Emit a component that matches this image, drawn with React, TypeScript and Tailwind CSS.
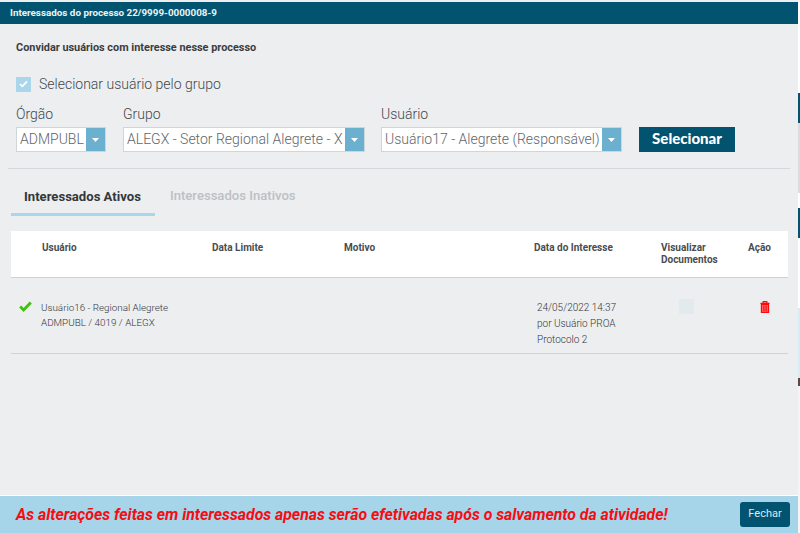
import React from "react";

function Select({ label, value, boxW, className }: { label: string; value: string; boxW: string; className?: string }) {
  return (
    <div className={"flex flex-col " + (className ?? "")}>
      <div className="h-[18px] text-[14px] font-light leading-[18px] text-[#43484b]">{label}</div>
      <div className={"mt-[4px] flex h-[25px] border border-[#cfd6da] bg-white " + boxW}>
        <div className="flex-1 overflow-hidden whitespace-nowrap pl-[3px] text-[14px] font-light leading-[23px] text-[#60666a]">{value}</div>
        <div className="flex w-[19px] shrink-0 items-center justify-center bg-[#6cb0cf]">
          <svg width="7" height="4" viewBox="0 0 7 4"><path d="M0 0h7L3.5 4z" fill="#fff" /></svg>
        </div>
      </div>
    </div>
  );
}

export default function App() {
  return (
    <div className="flex h-[533px] w-[800px] overflow-hidden bg-[#eceef0] font-['Roboto',sans-serif]">
      <div className="flex w-[798px] flex-col">
        <div className="mt-[2px] flex h-[22px] shrink-0 items-center bg-[#02536f] pl-[10px] text-[9.85px] font-bold text-[#eaf3f6]">
          Interessados do processo 22/9999-0000008-9
        </div>

        <div className="flex min-h-0 flex-1 flex-col">
          <div className="mx-[8px] border-b border-[#d5d8da] pb-[16px] pl-[8px]">
            <div className="pt-[17px] text-[10.9px] font-bold leading-[14px] text-[#3a3d3f]">
              Convidar usuários com interesse nesse processo
            </div>
            <div className="mt-[21px] flex h-[16px] items-center gap-[8px]">
              <div className="flex h-[15px] w-[15px] items-center justify-center rounded-[1px] bg-[#a9d6ea]">
                <svg width="9" height="8" viewBox="0 0 9 8"><path d="M1 4.2 3.4 6.4 8 1.4" fill="none" stroke="#fff" strokeWidth="1.7" /></svg>
              </div>
              <span className="text-[14px] font-light text-[#43484b]">Selecionar usuário pelo grupo</span>
            </div>
            <div className="mt-[13px] flex items-end">
              <Select label="Órgão" value="ADMPUBL" boxW="w-[90px]" />
              <Select label="Grupo" value="ALEGX - Setor Regional Alegrete - X" boxW="w-[242px]" className="ml-[17px]" />
              <Select label="Usuário" value="Usuário17 - Alegrete (Responsável)" boxW="w-[241px]" className="ml-[16px]" />
              <button className="ml-[17px] h-[25px] w-[96px] bg-[#02536f] pb-[2px] font-['Lato',sans-serif] text-[15px] font-black text-white">
                Selecionar
              </button>
            </div>
          </div>

          <div className="mx-[11px] mt-[12px] flex h-[35px]">
            <div className="w-[144px] border-b-[3px] border-[#a9d6ea] pl-[13px] pt-[8px] text-[13.1px] font-bold leading-[16px] text-[#33373a]">
              Interessados Ativos
            </div>
            <div className="ml-[15px] pt-[7px] text-[13.1px] font-medium leading-[16px] text-[#bcc0c3]">
              Interessados Inativos
            </div>
          </div>

          <div className="mx-[11px] mt-[15px] w-[777px]">
            <div className="grid h-[47px] grid-cols-[201px_132px_190px_127px_88px_39px] border-b border-[#d0d3d5] bg-white pt-[11px] text-[10px] font-bold leading-[12px] text-[#4a4d4f]">
              <div className="pl-[31px]">Usuário</div>
              <div>Data Limite</div>
              <div>Motivo</div>
              <div>Data do Interesse</div>
              <div>Visualizar<br />Documentos</div>
              <div className="-ml-[1px]">Ação</div>
            </div>
            <div className="grid h-[76px] grid-cols-[201px_132px_190px_127px_88px_39px] border-b border-[#d0d3d5] text-[10px] font-light text-[#33373a]">
              <div className="flex pl-[8px] pt-[22px]">
                <svg className="mt-[1px]" width="13" height="11" viewBox="0 0 13 11"><path d="M1.2 5.6 4.6 9 11.8 1.6" fill="none" stroke="#3cc40c" strokeWidth="2.8" /></svg>
                <div className="ml-[9px] text-[9.85px] leading-[15px]">
                  <div>Usuário16 - Regional Alegrete</div>
                  <div>ADMPUBL / 4019 / ALEGX</div>
                </div>
              </div>
              <div />
              <div />
              <div className="pl-[3px] pt-[22px] leading-[16px]">
                <div>24/05/2022 14:37</div>
                <div>por Usuário PROA</div>
                <div>Protocolo 2</div>
              </div>
              <div className="pl-[18px] pt-[21px]">
                <div className="h-[15px] w-[15px] bg-[#e3eaee]" />
              </div>
              <div className="pl-[11px] pt-[23px]">
                <svg width="10" height="12" viewBox="0 0 11 13">
                  <path d="M3.5 1.8V.6h4v1.2M.5 2.5h10" fill="none" stroke="#ff0a0a" strokeWidth="1.3" />
                  <path d="M1.6 3.6h7.8v8.8H1.6z" fill="#ff6a6a" stroke="#ff0a0a" strokeWidth="1.4" />
                  <path d="M4 5v6M5.5 5v6M7 5v6" stroke="#ff0a0a" strokeWidth=".9" />
                </svg>
              </div>
            </div>
          </div>
        </div>

        <div className="flex h-[38px] shrink-0 items-center justify-between border-t border-white bg-[#a6d5ea] pl-[16px] pr-[8px]">
          <span className="text-[15.8px] font-bold italic text-[#f60d12]">
            As alterações feitas em interessados apenas serão efetivadas após o salvamento da atividade!
          </span>
          <button className="h-[25px] w-[50px] rounded-[3px] bg-[#02536f] text-[11px] text-[#dfeaef]">Fechar</button>
        </div>
      </div>
      <div className="flex w-[2px] flex-col">
        <div className="h-[93px] bg-white" />
        <div className="h-[30px] bg-[#02536f]" />
        <div className="h-[70px] bg-[#dcdcdc]" />
        <div className="h-[15px] bg-white" />
        <div className="h-[30px] bg-[#02536f]" />
        <div className="h-[70px] bg-white" />
        <div className="h-[70px] bg-[#d6ecf6]" />
        <div className="h-[8px] bg-[#5c4a40]" />
        <div className="flex-1 bg-[#f4f4f4]" />
      </div>
    </div>
  );
}
